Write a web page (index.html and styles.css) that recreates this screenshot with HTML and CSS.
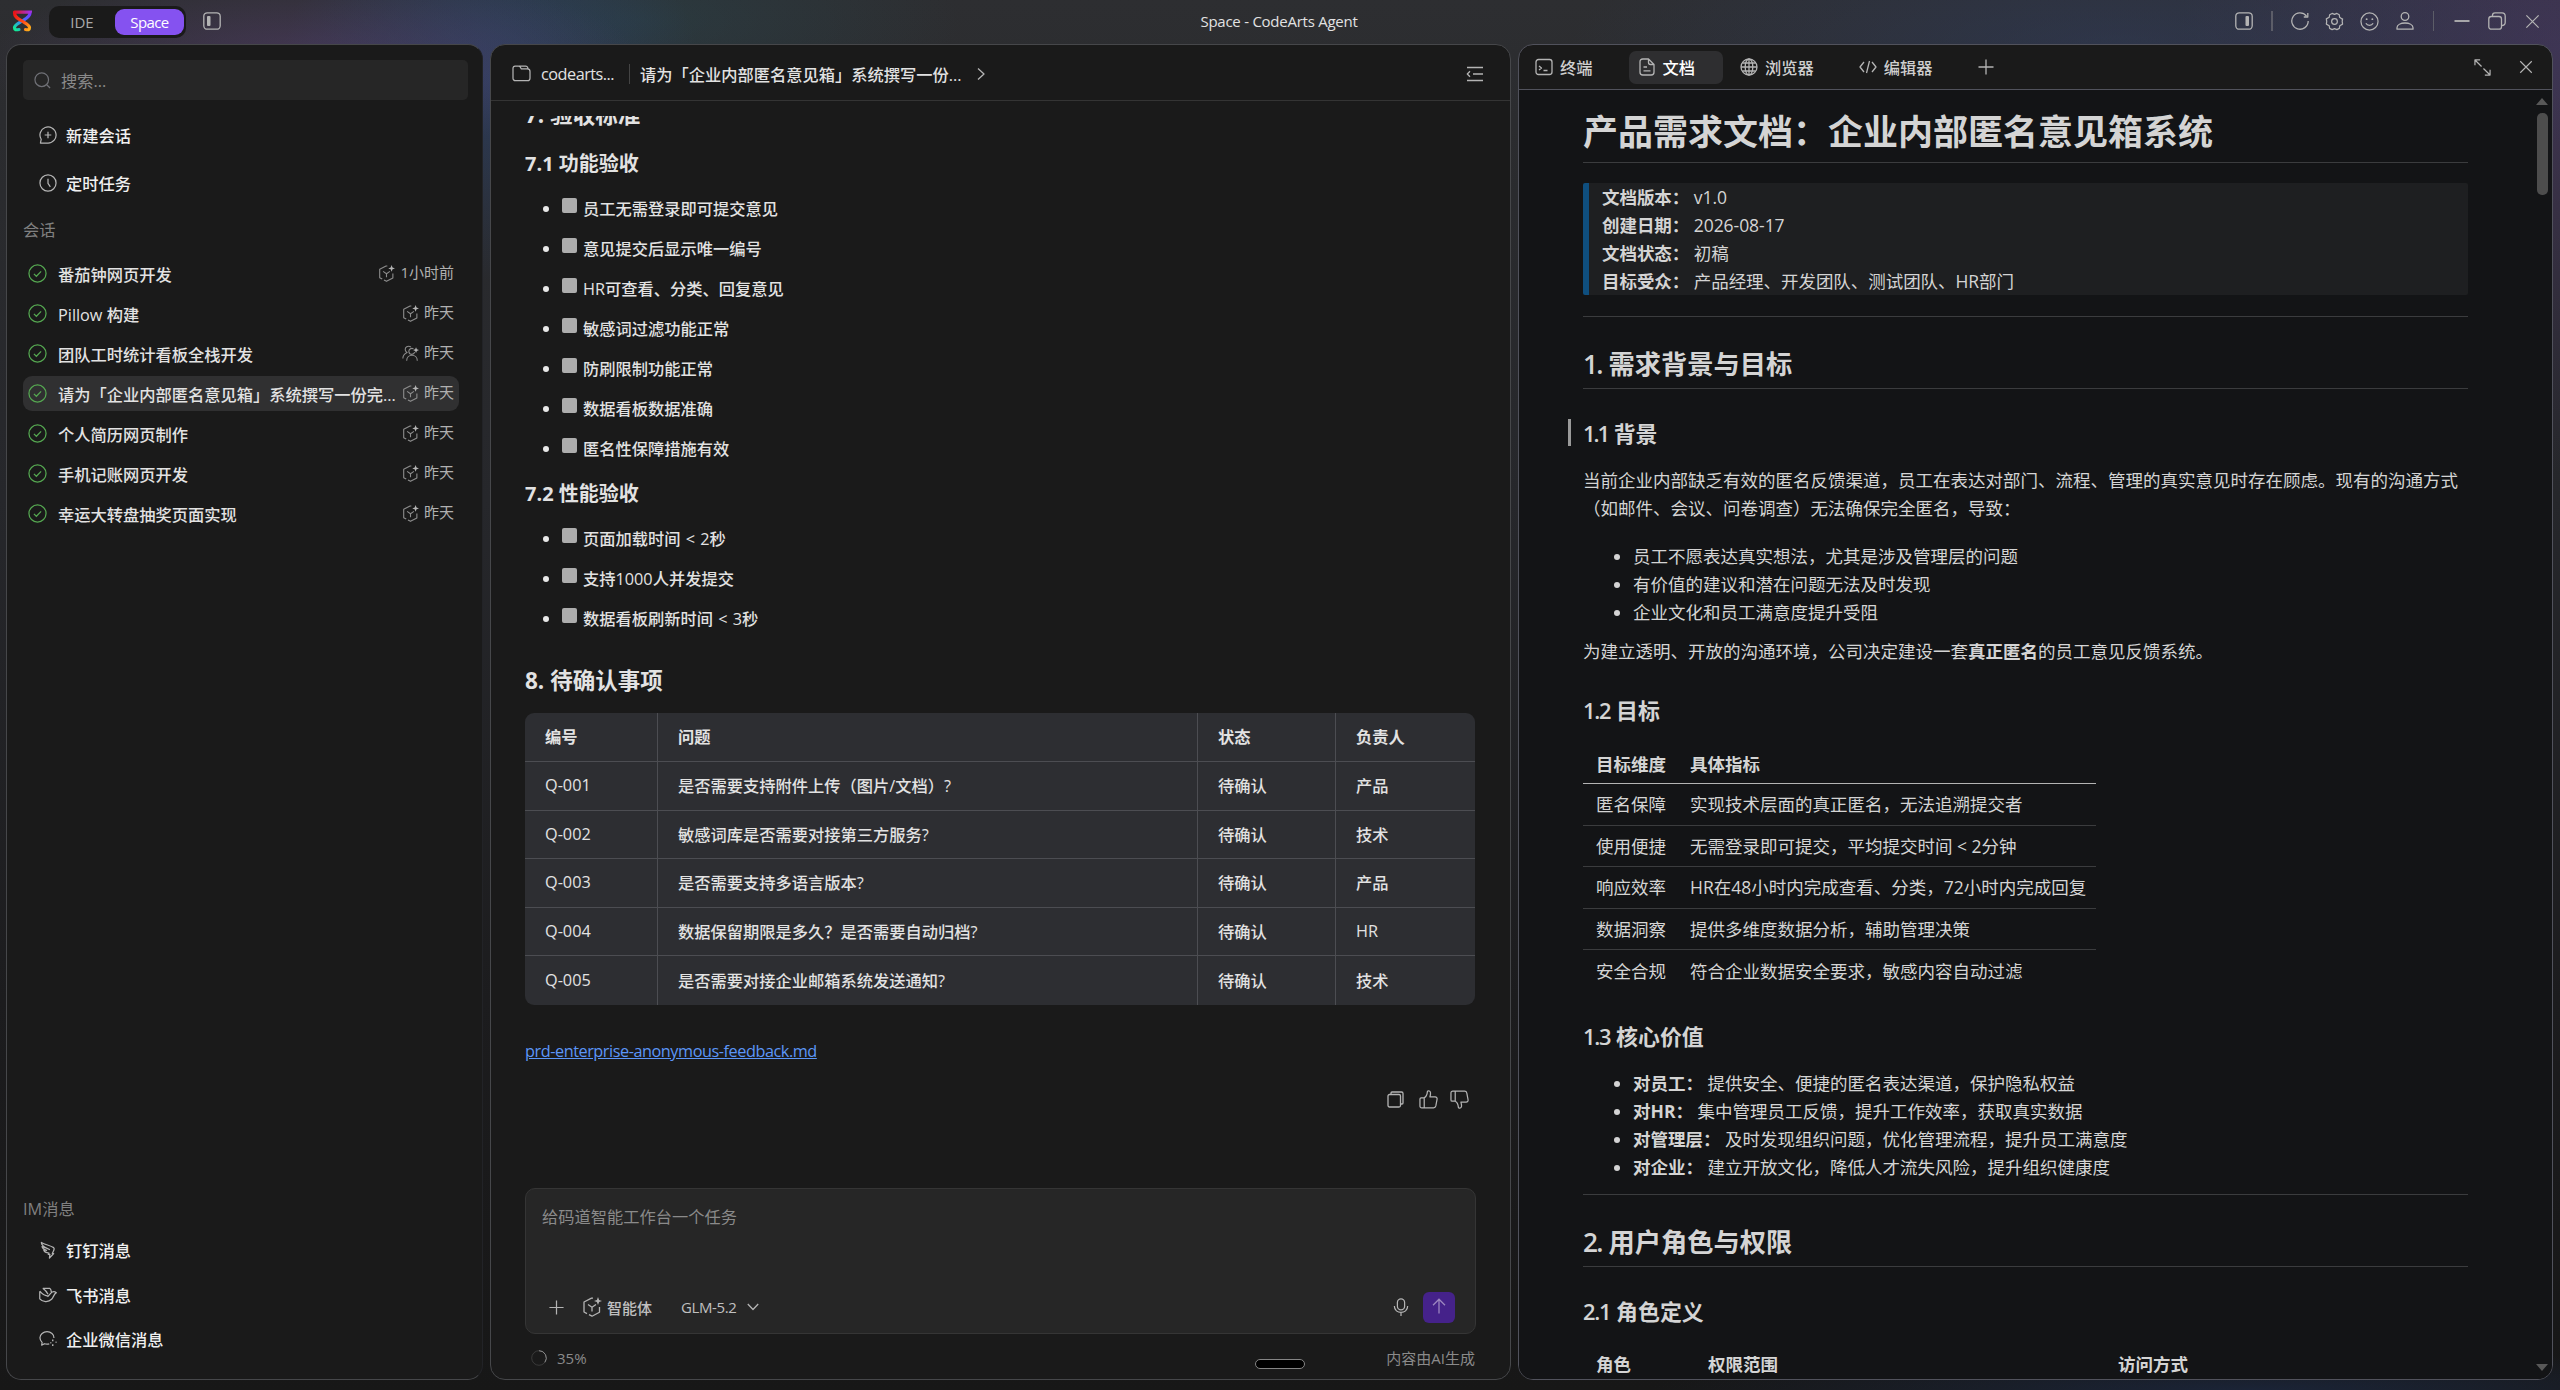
FILE: index.html
```html
<!DOCTYPE html>
<html lang="zh-CN">
<head>
  <meta charset="UTF-8" />
  <meta name="viewport" content="width=device-width, initial-scale=1.0"/>
  <title>Space - CodeArts Agent</title>
  <link rel="stylesheet" href="styles.css">
</head>
<body>
  <!-- 图标 -->
  <svg class="sprite" width="0" height="0">
    <symbol id="i-check" viewBox="0 0 20 20"><circle cx="10" cy="10" r="9"/><path d="M6.2 10.4l2.6 2.5 5-5.2"/></symbol>
    <symbol id="i-agent" viewBox="0 0 20 20"><path d="M11 1.200L9.500 1.200 2 5v10l3 1.600M7 17.700l3 1.500 7.500-4V10"/><path d="M6 7.500l4 2.700 4-2.700M10 10.2v4.300"/><path class="fill" d="M16 0l1.100 2.900L20 4l-2.900 1.100L16 8l-1.100-2.900L12 4l2.900-1.100z"/></symbol>
    <symbol id="i-team" viewBox="0 0 20 20"><path d="M10.500 2.300C7 .2 3 2.500 4 6.200c.3 1.200 1 2 2 2.500C3 10 1 12.500 1 16M13.500 4.500c-3-1.500-6 .8-5.300 3.800.4 1.700 1.800 2.700 3.300 2.700s3-1 3.400-2.500M5.500 18.500c0-8.500 12.500-8.500 12.500 0"/><path class="fill" d="M16.500 2.500l1 2.500 2.500 1-2.500 1-1 2.500-1-2.500-2.500-1 2.500-1z"/></symbol>
    <symbol id="i-plus" viewBox="0 0 18 18"><path d="M9 1.500v15M1.500 9h15"/></symbol>
    <symbol id="i-close" viewBox="0 0 18 18"><path d="M2.500 2.500l13 13M15.500 2.500l-13 13"/></symbol>
  </svg>

  <!-- 标题栏 -->
  <header class="titlebar">
    <svg class="logo" viewBox="0 0 20 22" fill="none" stroke-width="3.200" stroke-linecap="round">
      <defs>
        <linearGradient id="g1" x1="0" y1="0" x2="1" y2="1"><stop offset="0" stop-color="#f01414"/><stop offset=".55" stop-color="#ff4a1a"/><stop offset="1" stop-color="#ffb21a"/></linearGradient>
        <linearGradient id="g2" x1="1" y1="0" x2="0" y2="1"><stop offset="0" stop-color="#7a35ff"/><stop offset=".5" stop-color="#3a7bff"/><stop offset="1" stop-color="#10f090"/></linearGradient>
        <linearGradient id="g3" x1="0" y1="0" x2="1" y2="0"><stop offset="0" stop-color="#e81418"/><stop offset="1" stop-color="#a032e0"/></linearGradient>
      </defs>
      <path d="M18 3c0 4-4 5.500-8 8s-7.500 4-7.500 6.500S4 20 7 19.500" stroke="url(#g2)"/>
      <path d="M2.500 3c0 4 3.500 5.500 7.500 8s7.500 4 7.500 6.500-1.500 2.500-4 2" stroke="url(#g1)"/>
      <path d="M2.500 2.200h15.300l-.1.100" stroke="url(#g3)"/>
    </svg>
    <div class="mode">
      <span class="mode-item">IDE</span>
      <span class="mode-item on">Space</span>
    </div>
    <svg class="ico side-toggle" viewBox="0 0 18 18"><rect x=".8" y=".8" width="16.400" height="16.400" rx="3.500"/><rect class="fill" x="4" y="4" width="3.500" height="10" rx="1"/></svg>
    <div class="win-title">Space - CodeArts Agent</div>
    <div class="win-tools">
      <svg class="ico t1" viewBox="0 0 18 18"><rect x=".8" y=".8" width="16.400" height="16.400" rx="3.500"/><rect class="fill" x="10.500" y="4" width="3.500" height="10" rx="1"/></svg>
      <i class="bar"></i>
      <svg class="ico t2" viewBox="0 0 18 18"><path d="M15.500 4A8.200 8.200 0 1 0 17.200 9M16.800 1v4h-4"/></svg>
      <svg class="ico t3" viewBox="0 0 20 20"><path d="M7.500 1.500l2.500 1 2.500-1 2.500 1.400.4 2.700 2.200 1.600.9 0-.4 2.800.4 2.800-2.900 1.600-.5 2.800-2.600 1.300-2.500-1-2.500 1-2.600-1.300-.5-2.800L1.400 12.800 1.800 10l-.4-2.800 3-1.600.5-2.700z"/><circle cx="10" cy="10" r="3"/></svg>
      <svg class="ico t4" viewBox="0 0 20 20"><circle cx="10" cy="10" r="9"/><path d="M6.2 11.800c1.500 3 6.100 3 7.600 0"/><circle class="fill" cx="7" cy="7.500" r="1"/><circle class="fill" cx="13" cy="7.500" r="1"/></svg>
      <svg class="ico t5" viewBox="0 0 18 18"><circle cx="9" cy="4.500" r="3.800"/><path d="M1 17.200v-1.400c0-6.400 16-6.400 16 0v1.400z"/></svg>
      <i class="bar thin"></i>
      <svg class="ico t6" viewBox="0 0 16 18"><path d="M.5 9h15" stroke-width="1.800"/></svg>
      <svg class="ico t7" viewBox="0 0 18 18"><rect x=".8" y="4.500" width="12.700" height="12.700" rx="2.500"/><path d="M4.500 4.500V3.300C4.500 1.800 5.500.8 7 .8h7c2 0 3.200 1.200 3.200 3.200v6.500c0 1.800-1 3-3.700 3"/></svg>
      <svg class="ico t8"><use href="#i-close"/></svg>
    </div>
  </header>

  <main class="workspace">
    <!-- 左侧会话列表 -->
    <aside class="panel sidebar">
      <div class="search">
        <svg class="ico" viewBox="0 0 18 18"><circle cx="8.200" cy="8.200" r="7.200"/><path d="M13.500 13.500l3.500 3.500"/></svg>
        <span>搜索...</span>
      </div>
      <div class="nav-item">
        <svg class="ico" viewBox="0 0 19 19"><path d="M1.500 18l.8-4A8.500 8.500 0 1 1 9.500 18zM9.500 6v7M6 9.500h7"/></svg>
        <span>新建会话</span>
      </div>
      <div class="nav-item second">
        <svg class="ico" viewBox="0 0 19 19"><circle cx="9.500" cy="9.500" r="8.500"/><path d="M9.500 5v5l2.500 3.500"/></svg>
        <span>定时任务</span>
      </div>
      <div class="group-label">会话</div>
      <ul class="sessions">
        <li><svg class="ok"><use href="#i-check"/></svg><span class="name">番茄钟网页开发</span><svg class="ico kind"><use href="#i-agent"/></svg><span class="time">1小时前</span></li>
        <li><svg class="ok"><use href="#i-check"/></svg><span class="name">Pillow 构建</span><svg class="ico kind"><use href="#i-agent"/></svg><span class="time">昨天</span></li>
        <li><svg class="ok"><use href="#i-check"/></svg><span class="name">团队工时统计看板全栈开发</span><svg class="ico kind"><use href="#i-team"/></svg><span class="time">昨天</span></li>
        <li class="current"><svg class="ok"><use href="#i-check"/></svg><span class="name">请为「企业内部匿名意见箱」系统撰写一份完...</span><svg class="ico kind"><use href="#i-agent"/></svg><span class="time">昨天</span></li>
        <li><svg class="ok"><use href="#i-check"/></svg><span class="name">个人简历网页制作</span><svg class="ico kind"><use href="#i-agent"/></svg><span class="time">昨天</span></li>
        <li><svg class="ok"><use href="#i-check"/></svg><span class="name">手机记账网页开发</span><svg class="ico kind"><use href="#i-agent"/></svg><span class="time">昨天</span></li>
        <li><svg class="ok"><use href="#i-check"/></svg><span class="name">幸运大转盘抽奖页面实现</span><svg class="ico kind"><use href="#i-agent"/></svg><span class="time">昨天</span></li>
      </ul>
      <div class="im">
        <div class="group-label">IM消息</div>
        <div class="im-item">
          <svg class="ico" viewBox="0 0 19 19"><path d="M2.500 1.500c4 2.500 9 3 13 5.500 1 .7.500 2-.2 3.500l-1.300 2.700h1.500L11 18l.5-3.800H9.800l.7-1.500C7.500 12.500 5.500 11 5 9.500l3 .3C5 9 3.500 7.500 3.200 6l4.800 1.500 3 1.500C6.500 6.500 2.500 5.500 2.500 1.500z"/></svg>
          <span>钉钉消息</span>
        </div>
        <div class="im-item">
          <svg class="ico" viewBox="0 0 19 19"><path d="M.8 5.500c2.500 3 6 5 9.200 5.200M.8 5.500v8c3 3.500 9 4 12.500.5 2.200-2.200 2-5 5-7-2-1.500-4.500-.8-6 .8L9 11.500M4 2.500h7.500c1 1 1.500 2.500 1.500 4M4 2.500c2.500 1.800 4.500 4 5.500 6.300"/></svg>
          <span>飞书消息</span>
        </div>
        <div class="im-item">
          <svg class="ico" viewBox="0 0 19 19"><path d="M15.800 8.500C16 4.500 12.500 1.800 8.500 1.800S1 4.600 1 8.300c0 2 .9 3.600 2.300 4.800L2.800 16l3-1.500c1.500.5 3.500.5 5 .1"/><path d="M14.500 10v2M17.500 13h1M14.500 15v2M12 13.500h1" stroke-width="1.500"/></svg>
          <span>企业微信消息</span>
        </div>
      </div>
    </aside>

    <!-- 对话区 -->
    <section class="panel chat">
      <div class="chat-head">
        <svg class="ico folder" viewBox="0 0 20 18"><path d="M1 14V3.500C1 2 1.800 1.200 3.200 1.200h3.600c1 0 1.500.4 2 1.200l1 1.800h6.400c1.800 0 2.800 1 2.800 2.800v7c0 1.600-1 2.600-2.600 2.600H3.600C2 16.600 1 15.600 1 14zM7.500 1.200h7c1 0 1.700.5 2 1.300l.5 1.700"/></svg>
        <span class="proj">codearts...</span>
        <i class="sep"></i>
        <span class="topic">请为「企业内部匿名意见箱」系统撰写一份...</span>
        <svg class="ico next" viewBox="0 0 10 14"><path d="M2 1.500L8 7l-6 5.500"/></svg>
        <svg class="ico outline" viewBox="0 0 18 16"><path d="M1 1.500h16M7 8h10M1 14.500h16M4 5.200L1.300 8 4 10.800"/></svg>
      </div>

      <div class="chat-body">
        <h2>7. 验收标准</h2>
        <h3>7.1 功能验收</h3>
        <ul class="checks">
          <li><i class="box"></i>员工无需登录即可提交意见</li>
          <li><i class="box"></i>意见提交后显示唯一编号</li>
          <li><i class="box"></i>HR可查看、分类、回复意见</li>
          <li><i class="box"></i>敏感词过滤功能正常</li>
          <li><i class="box"></i>防刷限制功能正常</li>
          <li><i class="box"></i>数据看板数据准确</li>
          <li><i class="box"></i>匿名性保障措施有效</li>
        </ul>
        <h3>7.2 性能验收</h3>
        <ul class="checks">
          <li><i class="box"></i>页面加载时间 &lt; 2秒</li>
          <li><i class="box"></i>支持1000人并发提交</li>
          <li><i class="box"></i>数据看板刷新时间 &lt; 3秒</li>
        </ul>
        <h2 class="sec8">8. 待确认事项</h2>
        <div class="qtable">
          <b>编号</b><b>问题</b><b>状态</b><b>负责人</b>
          <span>Q-001</span><span>是否需要支持附件上传（图片/文档）?</span><span>待确认</span><span>产品</span>
          <span>Q-002</span><span>敏感词库是否需要对接第三方服务?</span><span>待确认</span><span>技术</span>
          <span>Q-003</span><span>是否需要支持多语言版本?</span><span>待确认</span><span>产品</span>
          <span>Q-004</span><span>数据保留期限是多久？是否需要自动归档?</span><span>待确认</span><span>HR</span>
          <span>Q-005</span><span>是否需要对接企业邮箱系统发送通知?</span><span>待确认</span><span>技术</span>
        </div>
        <a class="file-link" href="#">prd-enterprise-anonymous-feedback.md</a>
        <div class="actions">
          <svg class="ico copy" viewBox="0 0 17 17"><rect x="1" y="3.500" width="12.500" height="12.500" rx="1.500"/><path d="M4 3.500V2c0-.6.400-1 1-1h9.500c1 0 1.500.5 1.500 1.500V12c0 .6-.4 1-1 1h-1.500"/></svg>
          <svg class="ico" viewBox="0 0 20 20"><path d="M1 9.500c0-.8.500-1.300 1.300-1.300h3.200c2-1 3-3 3.300-6.200.1-1.600 3-1.500 3.300.6.200 1.700-.2 3.300-.6 4.700H17c1.500 0 2.300 1 2 2.500l-1.300 7c-.3 1.300-1 2-2.300 2H3c-1.300 0-2-.7-2-2zM5.500 8.200v10.500"/></svg>
          <svg class="ico down" viewBox="0 0 20 20"><path d="M1 9.500c0-.8.500-1.300 1.300-1.300h3.200c2-1 3-3 3.300-6.200.1-1.600 3-1.500 3.300.6.200 1.700-.2 3.300-.6 4.700H17c1.500 0 2.300 1 2 2.500l-1.300 7c-.3 1.300-1 2-2.300 2H3c-1.300 0-2-.7-2-2zM5.500 8.200v10.500"/></svg>
        </div>
      </div>

      <div class="composer">
        <div class="placeholder">给码道智能工作台一个任务</div>
        <div class="composer-bar">
          <svg class="ico add"><use href="#i-plus"/></svg>
          <svg class="ico agent"><use href="#i-agent"/></svg>
          <span class="agent-name">智能体</span>
          <span class="model">GLM-5.2</span>
          <svg class="ico caret" viewBox="0 0 12 8"><path d="M.8 1L6 6.500 11.200 1"/></svg>
          <svg class="ico mic" viewBox="0 0 16 20"><rect x="4.200" y="1" width="7.600" height="11.500" rx="3.800"/><path d="M1 8.500c0 9 14 9 14 0M8 15.300V19"/></svg>
          <button class="send"><svg viewBox="0 0 14 16"><path d="M7 15.500V1.500M1 7.200l6-6 6 6"/></svg></button>
        </div>
      </div>
      <div class="chat-foot">
        <svg class="ring" viewBox="0 0 16 16"><circle cx="8" cy="8" r="7.300" stroke="#3a3a3a"/><path d="M8 .7A7.300 7.300 0 0 1 13.900 12.300" stroke="#8a8a8a"/></svg>
        <span>35%</span>
        <i class="pill"></i>
        <span class="ai">内容由AI生成</span>
      </div>
    </section>

    <!-- 文档预览 -->
    <section class="panel preview">
      <div class="tabs">
        <div class="tab"><svg class="ico" viewBox="0 0 18 18"><rect x="1" y="1.500" width="16" height="15" rx="2.500"/><path d="M4 8l2.500 2L4 12M8.500 12.500h4"/></svg>终端</div>
        <div class="tab on"><svg class="ico" viewBox="0 0 18 18"><path d="M10.500 1H4.800C3 1 2 2 2 3.800v10.400C2 16 3 17 4.800 17h8.400c1.800 0 2.800-1 2.800-2.800V6.500zM10.500 1v3.500c0 1.300.7 2 2 2H16M5.500 9H9M5.500 12.800h7"/></svg>文档</div>
        <div class="tab"><svg class="ico" viewBox="0 0 18 18"><circle cx="9" cy="9" r="8"/><ellipse cx="9" cy="9" rx="3.800" ry="8"/><path d="M9 1v16M1 9h16M2.300 5h13.400M2.300 13h13.400"/></svg>浏览器</div>
        <div class="tab"><svg class="ico" viewBox="0 0 18 18"><path d="M5 4L1 9l4 5M13 4l4 5-4 5M10.500 3l-3 12"/></svg>编辑器</div>
        <svg class="ico plus"><use href="#i-plus"/></svg>
        <svg class="ico expand" viewBox="0 0 18 18"><path d="M1 6.500V1h5.500M1 1l7 7M10 10l7 7M17 11.500V17h-5.500"/></svg>
        <svg class="ico shut"><use href="#i-close"/></svg>
      </div>

      <div class="doc">
        <h1>产品需求文档：企业内部匿名意见箱系统</h1>
        <blockquote>
          <b>文档版本：</b> v1.0<br>
          <b>创建日期：</b> 2026-08-17<br>
          <b>文档状态：</b> 初稿<br>
          <b>目标受众：</b> 产品经理、开发团队、测试团队、HR部门
        </blockquote>
        <hr>
        <h2><span class="no">1.</span> 需求背景与目标</h2>
        <h3 class="marked"><span class="no tight">1.1</span> 背景</h3>
        <p>当前企业内部缺乏有效的匿名反馈渠道，员工在表达对部门、流程、管理的真实意见时存在顾虑。现有的沟通方式<br>（如邮件、会议、问卷调查）无法确保完全匿名，导致：</p>
        <ul>
          <li>员工不愿表达真实想法，尤其是涉及管理层的问题</li>
          <li>有价值的建议和潜在问题无法及时发现</li>
          <li>企业文化和员工满意度提升受阻</li>
        </ul>
        <p class="after-list">为建立透明、开放的沟通环境，公司决定建设一套<b>真正匿名</b>的员工意见反馈系统。</p>
        <h3><span class="no">1.2</span> 目标</h3>
        <table class="goals">
          <tr><th>目标维度</th><th>具体指标</th></tr>
          <tr><td>匿名保障</td><td>实现技术层面的真正匿名，无法追溯提交者</td></tr>
          <tr><td>使用便捷</td><td>无需登录即可提交，平均提交时间 &lt; 2分钟</td></tr>
          <tr><td>响应效率</td><td>HR在48小时内完成查看、分类，72小时内完成回复</td></tr>
          <tr><td>数据洞察</td><td>提供多维度数据分析，辅助管理决策</td></tr>
          <tr><td>安全合规</td><td>符合企业数据安全要求，敏感内容自动过滤</td></tr>
        </table>
        <h3><span class="no">1.3</span> 核心价值</h3>
        <ul class="values">
          <li><b>对员工：</b> 提供安全、便捷的匿名表达渠道，保护隐私权益</li>
          <li><b>对HR：</b> 集中管理员工反馈，提升工作效率，获取真实数据</li>
          <li><b>对管理层：</b> 及时发现组织问题，优化管理流程，提升员工满意度</li>
          <li><b>对企业：</b> 建立开放文化，降低人才流失风险，提升组织健康度</li>
        </ul>
        <hr class="tight">
        <h2><span class="no">2.</span> 用户角色与权限</h2>
        <h3><span class="no">2.1</span> 角色定义</h3>
        <table class="roles">
          <tr><th>角色</th><th>权限范围</th><th>访问方式</th></tr>
        </table>
        <div class="scrollbar"><i class="up"></i><i class="thumb"></i><i class="dn"></i></div>
      </div>
    </section>
  </main>
</body>
</html>
```

FILE: styles.css
```css
* {
  box-sizing: border-box;
}

body {
  margin: 0;
  width: 2560px;
  height: 1390px;
  overflow: hidden;
  font-family: "Open Sans", "Noto Sans CJK SC", sans-serif;
  font-size: 16.25px;
  color: #e2e2e2;
  background:
    radial-gradient(ellipse 330px 90px at 310px 60px, rgba(92, 66, 120, 0.5), transparent),
    radial-gradient(ellipse 210px 200px at 490px 80px, rgba(45, 75, 130, 0.5), transparent),
    radial-gradient(ellipse 320px 110px at 640px 20px, rgba(40, 75, 85, 0.4), transparent),
    radial-gradient(ellipse 550px 160px at 2120px 50px, rgba(48, 62, 100, 0.5), transparent),
    radial-gradient(ellipse 380px 420px at 2560px 50px, rgba(80, 58, 110, 0.55), transparent),
    radial-gradient(ellipse 600px 40px at 2250px 1390px, rgba(30, 48, 85, 0.5), transparent),
    linear-gradient(#2d2e31 0, #2b2c2f 120px, #26272b 500px, #1c1c1e 1000px, #171717);
}

ul {
  list-style: none;
  margin: 0;
  padding: 0;
}

h1, h2, h3, p, blockquote, hr {
  margin: 0;
}

svg {
  flex: none;
  display: block;
}

.sprite {
  position: absolute;
}

.ico {
  width: 18px;
  height: 18px;
  fill: none;
  stroke: #b4b4b4;
  stroke-width: 1.3;
  stroke-linejoin: round;
}

.fill {
  fill: #b4b4b4;
  stroke: none;
}

/* 标题栏 */
.titlebar {
  position: relative;
  display: flex;
  align-items: center;
  height: 44px;
  padding: 0 19px 2px 12px;
}

.logo {
  width: 20px;
  height: 22px;
}

.mode {
  display: flex;
  align-items: center;
  width: 137px;
  height: 32px;
  margin-left: 17px;
  margin-top: 2px;
  border-radius: 10px;
  background: #1a1a1a;
  font-size: 15px;
}

.mode-item {
  width: 66px;
  text-align: center;
  color: #a9a9a9;
}

.mode-item.on {
  width: 69px;
  height: 26px;
  line-height: 27px;
  border-radius: 9px;
  color: #fff;
  letter-spacing: -0.6px;
  background: #8552f0;
}

.side-toggle {
  margin-left: 17px;
}

.win-title {
  position: absolute;
  left: 0;
  right: 2px;
  text-align: center;
  font-size: 15px;
  letter-spacing: -0.25px;
}

.win-tools {
  display: flex;
  align-items: center;
  margin-left: auto;
}

.bar {
  width: 2px;
  height: 20px;
  margin: 0 18px;
  background: #5c5d68;
}

.bar.thin {
  width: 1px;
  margin: 0 20px 0 19px;
}

.t3, .t4 {
  width: 19px;
  height: 19px;
  margin-left: 16px;
}

.t5 {
  margin-left: 17px;
}

.t6 {
  width: 16px;
}

.t7 {
  margin-left: 18px;
}

.t8 {
  width: 17px;
  height: 17px;
  margin-left: 18px;
}

/* 面板 */
.workspace {
  display: flex;
  gap: 7px;
  height: 1336px;
  padding-left: 6px;
}

.panel {
  position: relative;
  display: flex;
  flex-direction: column;
  border: 1px solid #46474a;
  border-radius: 15px;
  background: #1a1a1a;
  overflow: hidden;
}

/* 侧栏 */
.sidebar {
  width: 477px;
  padding: 15px 14px 28px 16px;
  border-right-color: #222327;
}

.search {
  display: flex;
  align-items: center;
  height: 40px;
  padding-left: 11px;
  border-radius: 5px;
  background: #262626;
  color: #8a8a8a;
}

.search .ico {
  width: 17px;
  height: 17px;
  margin-right: 10px;
  stroke: #6f7076;
}

.nav-item {
  display: flex;
  align-items: center;
  height: 36px;
  margin-top: 17px;
  padding-left: 16px;
  font-weight: 500;
  color: #f0f0f0;
}

.nav-item .ico {
  margin-right: 9px;
}

.nav-item.second {
  margin-top: 12px;
}

.group-label {
  height: 24px;
  line-height: 24px;
  color: #808080;
}

.sidebar > .group-label {
  margin-top: 17px;
}

.sessions {
  margin: 14px 9px 0 0;
}

.sessions li {
  display: flex;
  align-items: center;
  height: 35px;
  margin-bottom: 5px;
  padding: 0 5px;
  border-radius: 9px;
}

.sessions li.current {
  background: #303031;
}

.ok {
  width: 19px;
  height: 19px;
  margin-right: 11px;
  fill: none;
  stroke: #55a851;
  stroke-width: 1.3;
}

.name {
  flex: 1;
  white-space: nowrap;
  font-weight: 500;
}

.kind {
  width: 17px;
  height: 17px;
  margin-right: 5px;
  stroke: #8c8c8c;
}

.kind + .time {
  margin-top: -4px;
  font-size: 15px;
  color: #b0b0b0;
}

.im {
  margin-top: auto;
}

.im-item {
  display: flex;
  align-items: center;
  height: 24px;
  margin-top: 20.5px;
  padding-left: 16px;
  font-weight: 500;
  color: #f0f0f0;
}

.im .group-label + .im-item {
  margin-top: 17px;
}

.im-item .ico {
  margin-right: 9px;
}

/* 对话 */
.chat {
  width: 1021px;
}

.chat-head {
  display: flex;
  align-items: center;
  height: 56px;
  padding: 2px 26px 0 21px;
  border-bottom: 1px solid #343434;
  flex: none;
}

.folder {
  width: 19px;
  height: 17px;
}

.proj {
  width: 74px;
  margin-left: 10px;
  letter-spacing: -0.5px;
}

.sep {
  width: 1px;
  height: 20px;
  margin: 0 10px 0 14px;
  background: #444;
}

.topic {
  font-weight: 500;
}

.next {
  width: 10px;
  height: 14px;
  margin-left: 14px;
}

.outline {
  height: 16px;
  margin-left: auto;
}

.chat-body {
  margin-top: 15px;
  height: 1072px;
  padding: 0 34px;
  overflow: hidden;
}

.chat-body h2 {
  margin-top: -16px;
  height: 30px;
  line-height: 30px;
  font-size: 22.5px;
}

.chat-body h2.sec8 {
  margin-top: 35px;
}

.chat-body h3 {
  margin-top: 19px;
  height: 28px;
  line-height: 28px;
  font-size: 20px;
}

.chat-body h2 + h3 {
  margin-top: 20px;
}

.checks {
  margin-top: 19px;
  padding-left: 18px;
}

.checks li {
  display: flex;
  align-items: center;
  height: 24px;
  margin-bottom: 16px;
  padding-bottom: 2px;
  font-weight: 500;
  word-spacing: 1px;
}

.checks li:last-child {
  margin-bottom: 0;
}

.checks li::before {
  content: "";
  width: 6px;
  height: 6px;
  margin: 2px 13px 0 0;
  border-radius: 50%;
  background: #e8e8e8;
}

/* 方形勾选框 */
.box {
  width: 15px;
  height: 15px;
  margin: -5px 6px 0 0;
  border-radius: 2px;
  background: #adadad;
}

.qtable {
  display: grid;
  grid-template-columns: 133px 540px 138px 1fr;
  grid-template-rows: 49px 49px 48px 49px 48px 49px;
  width: 950px;
  margin-top: 17px;
  border-radius: 9px;
  background: #2d2e32;
  overflow: hidden;
}

.qtable > * {
  display: flex;
  align-items: center;
  padding: 0 0 2px 20px;
  border-right: 1px solid #4c4d52;
  border-bottom: 1px solid #4c4d52;
  font-weight: 500;
}

.qtable > b {
  font-weight: 700;
}

.qtable > :nth-child(4n) {
  border-right: none;
}

.qtable > :nth-last-child(-n+4) {
  border-bottom: none;
}

.file-link {
  display: block;
  margin-top: 34px;
  height: 24px;
  line-height: 24px;
  letter-spacing: -0.45px;
  color: #5c96f8;
}

.actions {
  display: flex;
  align-items: center;
  justify-content: flex-end;
  gap: 12px;
  margin-top: 27px;
  padding-right: 7px;
}

.actions .ico {
  width: 19px;
  height: 19px;
}

.actions .copy {
  width: 17px;
  height: 17px;
  margin-right: 3px;
}

.actions .down {
  transform: scaleY(-1);
}

.composer {
  width: 951px;
  height: 146px;
  margin: 0 0 0 34px;
  padding: 16px 20px 10px 16px;
  border: 1px solid #353535;
  border-radius: 10px;
  background: #262626;
  flex: none;
}

.placeholder {
  height: 24px;
  line-height: 24px;
  color: #8a8a8a;
}

.composer-bar {
  display: flex;
  align-items: center;
  height: 32px;
  margin-top: 62px;
  padding-left: 6px;
  color: #c0c0c0;
  font-size: 15px;
}

.composer-bar .add {
  width: 17px;
  height: 17px;
}

.composer-bar .agent {
  width: 20px;
  height: 20px;
  margin: 0 5px 0 17px;
}

.agent-name {
  font-weight: 500;
}

.model {
  width: 57px;
  margin-left: 29px;
  letter-spacing: -0.4px;
}

.caret {
  width: 12px;
  height: 8px;
  margin-left: 9px;
}

.mic {
  width: 16px;
  height: 19px;
  margin-left: auto;
  margin-right: 14px;
}

.send {
  display: flex;
  align-items: center;
  justify-content: center;
  width: 32px;
  height: 31px;
  padding: 0;
  border: none;
  border-radius: 6px;
  background: #45228a;
}

.send svg {
  width: 14px;
  height: 16px;
  margin-top: -2px;
  fill: none;
  stroke: #9c86c0;
  stroke-width: 1.3;
}

.chat-foot {
  position: relative;
  display: flex;
  align-items: center;
  height: 44px;
  padding: 3px 35px 0 40px;
  font-size: 15px;
  color: #8a8a8a;
}

.ring {
  width: 16px;
  height: 16px;
  margin-right: 10px;
  fill: none;
}

.pill {
  position: absolute;
  left: 764px;
  top: 25px;
  width: 50px;
  height: 10px;
  border: 1px solid #858585;
  border-radius: 5px;
  background: #000;
}

.ai {
  margin-left: auto;
}

/* 文档预览 */
.preview {
  width: 1035px;
  border-color: #51525c;
}

.tabs {
  display: flex;
  align-items: center;
  height: 45px;
  padding: 0 18px 0 7px;
  border-bottom: 1px solid #51525c;
  flex: none;
}

.tab {
  display: flex;
  align-items: center;
  height: 33px;
  margin-right: 7px;
  padding: 0 28px 0 9px;
  border-radius: 7px;
  font-weight: 500;
  color: #cfcfcf;
}

.tab + .tab {
  margin-left: 1px;
}

.tab.on {
  background: #2e2e30;
  color: #fff;
}

.tab .ico {
  margin-right: 7px;
}

.tabs .plus {
  margin-left: 9px;
}

.expand {
  width: 17px;
  height: 17px;
  margin-left: auto;
  margin-right: 27px;
}

.shut {
  width: 16px;
  height: 16px;
}

.doc {
  position: relative;
  flex: 1;
  padding: 20px 84px 0 64px;
  background: #131416;
  color: #d4d4d4;
  font-size: 17.5px;
  line-height: 28px;
  overflow: hidden;
}

.doc h1 {
  height: 53px;
  line-height: 44px;
  border-bottom: 1px solid #3b3c3e;
  font-size: 35px;
}

.doc blockquote {
  margin-top: 20px;
  height: 112px;
  padding-left: 13px;
  border-left: 6px solid #0f4f7f;
  border-radius: 2px;
  background: #1e1f21;
  letter-spacing: -0.05px;
}

.doc hr {
  height: 1px;
  margin-top: 21px;
  border: none;
  background: #3b3c3e;
}

.doc hr.tight {
  margin-top: 13px;
}

.doc h2 {
  height: 42px;
  margin-top: 30px;
  line-height: 34px;
  border-bottom: 1px solid #3b3c3e;
  font-size: 26.25px;
  font-weight: 700;
}

.doc h3 {
  position: relative;
  height: 28px;
  margin-top: 31px;
  font-size: 21.9px;
  font-weight: 700;
}

/* 标题编号 */
.no {
  font-weight: 600;
  letter-spacing: -1.2px;
}

h2 .no {
  letter-spacing: -1.8px;
}

.no.tight {
  letter-spacing: -2px;
}

.marked::before {
  content: "";
  position: absolute;
  left: -15px;
  top: -1px;
  width: 3px;
  height: 27px;
  background: #9a9a9a;
}

.doc p {
  margin-top: 18px;
  white-space: nowrap;
}

.doc ul {
  margin-top: 20px;
  padding-left: 50px;
}

.doc .values {
  margin-top: 18px;
}

.doc li {
  position: relative;
}

.doc li::before {
  content: "";
  position: absolute;
  left: -19px;
  top: 12px;
  width: 6px;
  height: 6px;
  border-radius: 50%;
  background: #d4d4d4;
}

.doc p.after-list {
  margin-top: 11px;
}

.doc p.after-list + h3 {
  margin-top: 32px;
}

.doc table {
  width: 513px;
  margin-top: 19px;
  border-spacing: 0;
  white-space: nowrap;
}

.doc th {
  height: 40px;
  padding: 0 0 0 13px;
  border-bottom: 1px solid #b4b4b4;
  text-align: left;
  font-weight: 700;
}

.doc td {
  height: 41.5px;
  padding: 0 0 0 13px;
  border-bottom: 1px solid #3b3c3e;
}

.doc tr:last-child td {
  border-bottom: none;
}

.goals th:first-child {
  width: 94px;
}

.doc table.roles {
  width: 885px;
}

.roles th:first-child {
  width: 112px;
}

.roles th:nth-child(2) {
  width: 410px;
}

.scrollbar {
  position: absolute;
  top: 0;
  right: 3px;
  bottom: 0;
  width: 13px;
}

.scrollbar i {
  position: absolute;
  left: 0;
}

.scrollbar .thumb {
  left: 1px;
  top: 23px;
  width: 11px;
  height: 82px;
  border-radius: 5px;
  background: #4d4d4d;
}

.scrollbar .up {
  top: 8px;
  border: 6.5px solid transparent;
  border-top: none;
  border-bottom: 7px solid #585858;
}

.scrollbar .dn {
  bottom: 8px;
  border: 6.5px solid transparent;
  border-bottom: none;
  border-top: 7px solid #585858;
}
```
